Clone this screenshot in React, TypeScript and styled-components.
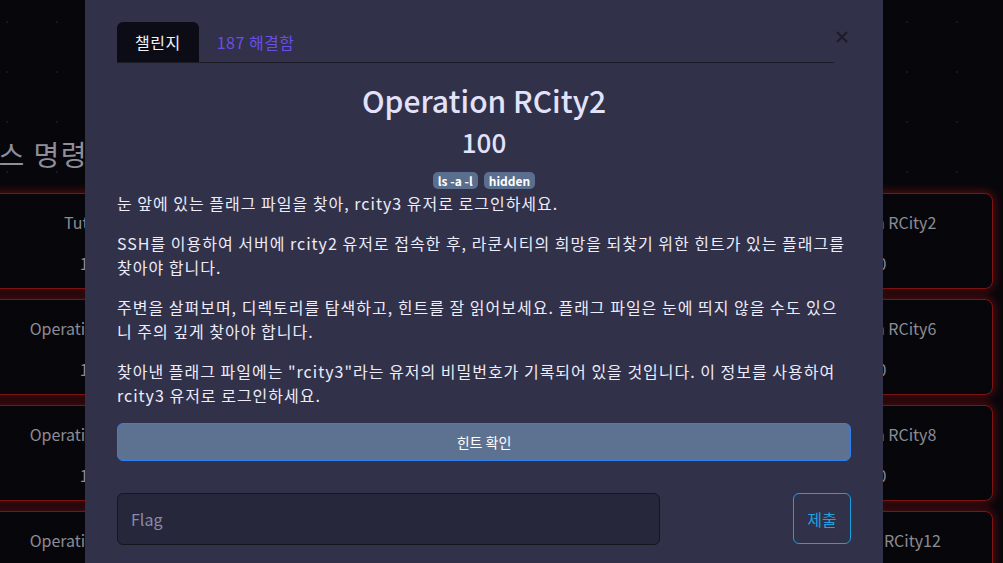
import styled, { createGlobalStyle } from "styled-components";

const GlobalStyle = createGlobalStyle`
    html, body {
        margin: 0;
        height: 100%;
        overflow: hidden;
    }
    body {
        background-color: #07070b;
        background-image: radial-gradient(circle, #16161f 1px, transparent 1.5px);
        background-size: 50px 50px;
        background-position: -18px -3px;
        font-family: "Noto Sans CJK KR", "Noto Sans", sans-serif;
    }
`;

const Page = styled.main`
    width: 1020px;
    margin-left: -27px;
    padding-top: 137px;
`;

const PageTitle = styled.h1`
    margin: 0 0 22px -29px;
    font-size: 28px;
    font-weight: 400;
    line-height: 34px;
    letter-spacing: 1.5px;
    color: #8f8f9c;
`;

const CardGrid = styled.div`
    display: grid;
    grid-template-columns: repeat(4, 240px);
    grid-auto-rows: 96px;
    column-gap: 20px;
    row-gap: 10px;
`;

const Card = styled.div`
    display: flex;
    flex-direction: column;
    align-items: center;
    gap: 17px;
    padding-top: 16px;
    box-sizing: border-box;
    background: #07070b;
    border: 1px solid #7c1414;
    border-radius: 8px;
    box-shadow: 0 0 9px 2px rgba(170, 20, 20, 0.45);
    color: #8c8c94;
    font-size: 16px;
    line-height: 24px;
`;

const Modal = styled.div`
    position: fixed;
    top: 0;
    left: 85px;
    width: 798px;
    height: 100%;
    box-sizing: border-box;
    padding: 22px 32px 0;
    background: #313149;
    color: #ececfa;
`;

const CloseButton = styled.button`
    position: absolute;
    top: 30px;
    right: 34px;
    width: 14px;
    height: 14px;
    padding: 0;
    border: none;
    background: transparent;
    cursor: pointer;
`;

const TabBar = styled.div`
    display: flex;
    margin-right: 17px;
    border-bottom: 1px solid #1b1b28;
`;

const Tab = styled.div<{ $active?: boolean }>`
    display: flex;
    align-items: center;
    height: 40px;
    padding: 0 18px;
    border-radius: 6px 6px 0 0;
    background: ${(p) => (p.$active ? "#0c0c17" : "transparent")};
    color: ${(p) => (p.$active ? "#f2f2ff" : "#6a4ee6")};
    font-size: 16px;
    letter-spacing: 0.5px;
    cursor: pointer;
`;

const Title = styled.h2`
    margin: 19px 0 0;
    text-align: center;
    font-size: 30px;
    font-weight: 500;
    line-height: 36px;
    color: #e2e2fa;
`;

const Points = styled.div`
    margin-top: 8px;
    text-align: center;
    font-size: 26px;
    font-weight: 500;
    line-height: 32px;
    color: #e2e2fa;
`;

const TagRow = styled.div`
    display: flex;
    justify-content: center;
    gap: 6px;
    margin-top: 14px;
`;

const Tag = styled.span`
    display: inline-flex;
    align-items: center;
    height: 17px;
    padding: 0 5px;
    border-radius: 5px;
    background: #5a6e8d;
    color: #ffffff;
    font-size: 12px;
    font-weight: 700;
`;

const Description = styled.div`
    margin-top: 2px;
`;

const Paragraph = styled.p`
    margin: 0 0 16px;
    font-size: 16px;
    line-height: 24px;
    letter-spacing: 1px;
    color: #ececfa;
`;

const HintButton = styled.button`
    display: block;
    width: 100%;
    height: 38px;
    margin-top: 1px;
    border: 1px solid #2f80f0;
    border-radius: 6px;
    background: #5d7291;
    color: #ffffff;
    font-family: inherit;
    font-size: 14px;
    cursor: pointer;
`;

const FlagForm = styled.form`
    display: flex;
    justify-content: space-between;
    align-items: flex-start;
    margin-top: 32px;
`;

const FlagInput = styled.input`
    width: 543px;
    height: 52px;
    box-sizing: border-box;
    padding: 0 13px;
    border: 1px solid #16161f;
    border-radius: 6px;
    background: #27273c;
    color: #ececfa;
    font-family: inherit;
    font-size: 16px;
    outline: none;

    &::placeholder {
        color: #8a8aa8;
    }
`;

const SubmitButton = styled.button`
    width: 58px;
    height: 51px;
    border: 1px solid #18a0e2;
    border-radius: 6px;
    background: transparent;
    color: #1ea2e0;
    font-family: inherit;
    font-size: 16px;
    cursor: pointer;
`;

const cards = [
    ["Tutorial", 100],
    ["Operation RCity1", 100],
    ["Operation RCity1.5", 100],
    ["Operation RCity2", 100],
    ["Operation RCity3", 100],
    ["Operation RCity4", 100],
    ["Operation RCity5", 100],
    ["Operation RCity6", 100],
    ["Operation RCity7", 100],
    ["Operation RCity7.5", 100],
    ["Operation RCity7.7", 100],
    ["Operation RCity8", 100],
    ["Operation RCity9", 100],
    ["Operation RCity10", 100],
    ["Operation RCity11", 100],
    ["Operation RCity12", 100],
] as const;

const paragraphs = [
    "눈 앞에 있는 플래그 파일을 찾아, rcity3 유저로 로그인하세요.",
    "SSH를 이용하여 서버에 rcity2 유저로 접속한 후, 라쿤시티의 희망을 되찾기 위한 힌트가 있는 플래그를 찾아야 합니다.",
    "주변을 살펴보며, 디렉토리를 탐색하고, 힌트를 잘 읽어보세요. 플래그 파일은 눈에 띄지 않을 수도 있으니 주의 깊게 찾아야 합니다.",
    '찾아낸 플래그 파일에는 "rcity3"라는 유저의 비밀번호가 기록되어 있을 것입니다. 이 정보를 사용하여 rcity3 유저로 로그인하세요.',
];

const App = () => {
    return (
        <>
            <GlobalStyle />
            <Page>
                <PageTitle>리눅스 명령어 챌린지</PageTitle>
                <CardGrid>
                    {cards.map(([name, value]) => (
                        <Card key={name}>
                            <span>{name}</span>
                            <span>{value}</span>
                        </Card>
                    ))}
                </CardGrid>
            </Page>
            <Modal role="dialog">
                <CloseButton aria-label="닫기">
                    <svg width="14" height="14" viewBox="0 0 14 14">
                        <path d="M2 2 L12 12 M12 2 L2 12" stroke="#1d1d2a" strokeWidth="2.4" />
                    </svg>
                </CloseButton>
                <TabBar>
                    <Tab $active>챌린지</Tab>
                    <Tab>187 해결함</Tab>
                </TabBar>
                <Title>Operation RCity2</Title>
                <Points>100</Points>
                <TagRow>
                    <Tag>ls -a -l</Tag>
                    <Tag>hidden</Tag>
                </TagRow>
                <Description>
                    {paragraphs.map((text) => (
                        <Paragraph key={text}>{text}</Paragraph>
                    ))}
                </Description>
                <HintButton type="button">힌트 확인</HintButton>
                <FlagForm onSubmit={(e) => e.preventDefault()}>
                    <FlagInput placeholder="Flag" />
                    <SubmitButton type="submit">제출</SubmitButton>
                </FlagForm>
            </Modal>
        </>
    );
};

export default App;
